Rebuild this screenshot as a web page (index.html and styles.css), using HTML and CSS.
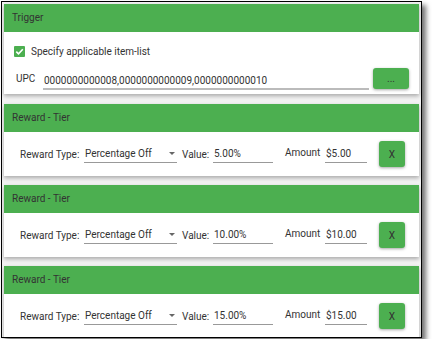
FILE: index.html
```html
<!DOCTYPE html>
<html lang="en">

<head>
  <meta charset="UTF-8">
  <meta name="viewport" content="width=device-width, initial-scale=1.0">
  <title>Reward Tiers</title>
  <link rel="stylesheet" href="styles.css">
</head>

<body>
  <div class="frame">
    <section class="card trigger">
      <div class="cardHead">Trigger</div>
      <div class="cardBody">
        <label class="checkRow">
          <span class="checkBox">
            <svg width="11" height="11" viewBox="0 0 11 11">
              <path d="M2.3 5.6 L4.5 7.8 L8.8 3.3" fill="none" stroke="#fff" stroke-width="1.6" />
            </svg>
          </span>
          Specify applicable item-list
        </label>
        <div class="upcRow">
          <span class="upcLabel">UPC</span>
          <span class="field upcField">0000000000008,0000000000009,0000000000010</span>
          <button class="greenBtn moreBtn">...</button>
        </div>
      </div>
    </section>

    <section class="card">
      <div class="cardHead">Reward - Tier</div>
      <div class="cardBody tierRow">
        <span class="lbl typeLbl">Reward Type:</span>
        <span class="field selectField">Percentage Off<i class="arrow"></i></span>
        <span class="lbl valueLbl">Value:</span>
        <span class="field valueField">5.00%</span>
        <span class="lbl amountLbl">Amount</span>
        <span class="field amountField">$5.00</span>
        <button class="greenBtn xBtn">X</button>
      </div>
    </section>

    <section class="card">
      <div class="cardHead">Reward - Tier</div>
      <div class="cardBody tierRow">
        <span class="lbl typeLbl">Reward Type:</span>
        <span class="field selectField">Percentage Off<i class="arrow"></i></span>
        <span class="lbl valueLbl">Value:</span>
        <span class="field valueField">10.00%</span>
        <span class="lbl amountLbl">Amount</span>
        <span class="field amountField">$10.00</span>
        <button class="greenBtn xBtn">X</button>
      </div>
    </section>

    <section class="card">
      <div class="cardHead">Reward - Tier</div>
      <div class="cardBody tierRow">
        <span class="lbl typeLbl">Reward Type:</span>
        <span class="field selectField">Percentage Off<i class="arrow"></i></span>
        <span class="lbl valueLbl">Value:</span>
        <span class="field valueField">15.00%</span>
        <span class="lbl amountLbl">Amount</span>
        <span class="field amountField">$15.00</span>
        <button class="greenBtn xBtn">X</button>
      </div>
    </section>
  </div>
</body>

</html>
```

FILE: styles.css
```css
html,
body {
  margin: 0;
  background-color: #fff;
  font-family: Roboto, "Liberation Sans", sans-serif;
  color: #333;
}

body {
  padding: 1px;
}

.frame {
  box-sizing: border-box;
  width: 421px;
  height: 337px;
  border: 1px solid #000;
  padding: 0 2px;
  padding-top: 2px;
  background-color: #f2f2f2;
  box-shadow: 4px 4px 5px rgba(0, 0, 0, 0.55);
  overflow: hidden;
}

.card {
  background-color: #fff;
  box-shadow: 0 2px 4px rgba(0, 0, 0, 0.3);
  margin-bottom: 9px;
}

.cardHead {
  background-color: #4caf50;
  height: 28px;
  line-height: 28px;
  padding-left: 8px;
  font-size: 10px;
}

.cardBody {
  height: 44px;
}

.trigger {
  margin-bottom: 10px;
}

.trigger .cardBody {
  height: 62px;
}

.checkRow {
  display: flex;
  align-items: center;
  padding: 14px 0 0 10px;
  font-size: 10px;
  height: 11px;
}

.checkBox {
  width: 11px;
  height: 11px;
  border-radius: 1px;
  background-color: #4caf50;
  margin-right: 6px;
  display: flex;
}

.upcRow {
  display: flex;
  align-items: center;
  margin-top: 9px;
  padding-left: 12px;
}

.upcLabel {
  font-size: 10px;
  width: 27px;
}

.field {
  box-sizing: border-box;
  display: block;
  height: 18px;
  line-height: 18px;
  font-size: 10px;
  border-bottom: 1px solid #999;
  padding-left: 1px;
  white-space: nowrap;
}

.upcField {
  width: 326px;
  border-bottom: 2px solid #bbb;
  margin-top: 6px;
}

.greenBtn {
  border: none;
  border-radius: 3px;
  background-color: #4caf50;
  color: #333;
  font-family: inherit;
  box-shadow: 0 1px 3px rgba(0, 0, 0, 0.35);
  padding: 0;
  cursor: pointer;
}

.moreBtn {
  width: 36px;
  height: 21px;
  margin-left: 4px;
  font-size: 10px;
}

.tierRow {
  display: flex;
  align-items: center;
  padding-left: 16px;
  font-size: 10px;
}

.lbl {
  white-space: nowrap;
}

.typeLbl {
  width: 60px;
}

.selectField {
  position: relative;
  width: 93px;
  margin-left: 4px;
}

.arrow {
  position: absolute;
  right: 2px;
  top: 7px;
  border-left: 3px solid transparent;
  border-right: 3px solid transparent;
  border-top: 3px solid #666;
}

.valueLbl {
  width: 27px;
  margin-left: 5px;
}

.valueField {
  width: 60px;
  margin-left: 4px;
}

.amountLbl {
  width: 35px;
  margin-left: 12px;
  margin-top: -3px;
}

.amountField {
  width: 42px;
  margin-left: 5px;
}

.xBtn {
  width: 26px;
  height: 26px;
  margin-left: 12px;
  font-size: 10px;
}
```
